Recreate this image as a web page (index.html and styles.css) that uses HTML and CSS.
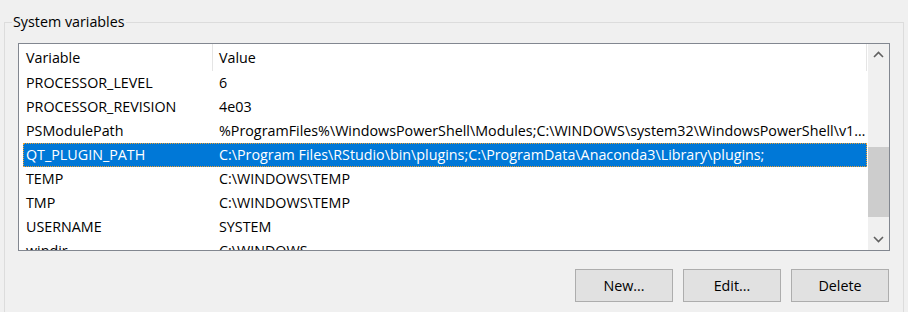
FILE: index.html
```html
<!DOCTYPE html>
<html lang="en">
<head>
    <meta charset="UTF-8">
    <meta name="viewport" content="width=device-width, initial-scale=1.0">
    <title>System variables</title>
    <link rel="stylesheet" href="styles.css">
</head>
<body>
    <fieldset class="group">
        <legend>System variables</legend>
        <div class="list-box">
            <div class="list">
                <div class="list-header">
                    <div class="col-name">Variable</div>
                    <div class="col-value">Value</div>
                </div>
                <div class="row">
                    <div class="cell-name">PROCESSOR_LEVEL</div>
                    <div class="cell-value">6</div>
                </div>
                <div class="row">
                    <div class="cell-name">PROCESSOR_REVISION</div>
                    <div class="cell-value">4e03</div>
                </div>
                <div class="row">
                    <div class="cell-name">PSModulePath</div>
                    <div class="cell-value">%ProgramFiles%\WindowsPowerShell\Modules;C:\WINDOWS\system32\WindowsPowerShell\v1.0\Modules</div>
                </div>
                <div class="row selected">
                    <div class="cell-name">QT_PLUGIN_PATH</div>
                    <div class="cell-value">C:\Program Files\RStudio\bin\plugins;C:\ProgramData\Anaconda3\Library\plugins;</div>
                </div>
                <div class="row">
                    <div class="cell-name">TEMP</div>
                    <div class="cell-value">C:\WINDOWS\TEMP</div>
                </div>
                <div class="row">
                    <div class="cell-name">TMP</div>
                    <div class="cell-value">C:\WINDOWS\TEMP</div>
                </div>
                <div class="row">
                    <div class="cell-name">USERNAME</div>
                    <div class="cell-value">SYSTEM</div>
                </div>
                <div class="row">
                    <div class="cell-name">windir</div>
                    <div class="cell-value">C:\WINDOWS</div>
                </div>
            </div>
            <div class="scrollbar">
                <div class="scroll-btn">
                    <svg width="11" height="7" viewBox="0 0 11 7"><polyline points="1,6 5.5,1.5 10,6" fill="none" stroke="#606060" stroke-width="1.6"/></svg>
                </div>
                <div class="scroll-track">
                    <div class="scroll-thumb"></div>
                </div>
                <div class="scroll-btn">
                    <svg width="11" height="7" viewBox="0 0 11 7"><polyline points="1,1 5.5,5.5 10,1" fill="none" stroke="#606060" stroke-width="1.6"/></svg>
                </div>
            </div>
        </div>
        <div class="buttons">
            <button class="btn">New...</button>
            <button class="btn">Edit...</button>
            <button class="btn">Delete</button>
        </div>
    </fieldset>
</body>
</html>
```

FILE: styles.css
```css
html, body {
    height: 312px;
    overflow: hidden;
}

body {
    margin: 0;
    background-color: #f0f0f0;
    font-family: "Open Sans", "Noto Sans", sans-serif;
    font-size: 14.3px;
    color: #000;
}

.group {
    margin: 14px 4px 0;
    padding: 13px 13px 12px;
    border: 1px solid #dcdcdc;
    min-inline-size: 0;
}

.group legend {
    margin-left: -6px;
    padding: 0 1px;
    line-height: 16px;
}

.list-box {
    display: flex;
    height: 206px;
    border: 1px solid #828790;
    background-color: #fff;
}

.list {
    flex: 1;
    overflow: hidden;
    min-width: 0;
}

.list-header {
    display: flex;
    height: 27px;
    line-height: 28px;
}

.col-name {
    width: 186px;
    padding-left: 7px;
    border-right: 1px solid #e5e5e5;
}

.col-value {
    width: 647px;
    padding-left: 6px;
    border-right: 1px solid #e5e5e5;
}

.row {
    display: flex;
    height: 24px;
    line-height: 22px;
    margin-left: 4px;
    width: 844px;
    border: 1px solid transparent;
    box-sizing: border-box;
}

.row.selected {
    background-color: #0078d7;
    color: #fff;
    border: 1px dotted #f0a030;
}

.cell-name {
    width: 186px;
    padding-left: 2px;
    flex-shrink: 0;
}

.cell-value {
    flex: 1;
    min-width: 0;
    padding-left: 7px;
    white-space: nowrap;
    overflow: hidden;
    text-overflow: ellipsis;
}

.scrollbar {
    width: 21px;
    display: flex;
    flex-direction: column;
    background-color: #f0f0f0;
}

.scroll-btn {
    height: 21px;
    display: flex;
    justify-content: center;
    align-items: center;
}

.scroll-track {
    flex: 1;
}

.scroll-thumb {
    margin-top: 82px;
    height: 70px;
    background-color: #cdcdcd;
}

.buttons {
    display: flex;
    justify-content: flex-end;
    gap: 10px;
    margin-top: 18px;
    margin-right: 1px;
}

.btn {
    width: 98px;
    height: 33px;
    background-color: #e1e1e1;
    border: 1px solid #adadad;
    font-family: inherit;
    font-size: 14.3px;
    color: #000;
    padding: 0;
}
```
